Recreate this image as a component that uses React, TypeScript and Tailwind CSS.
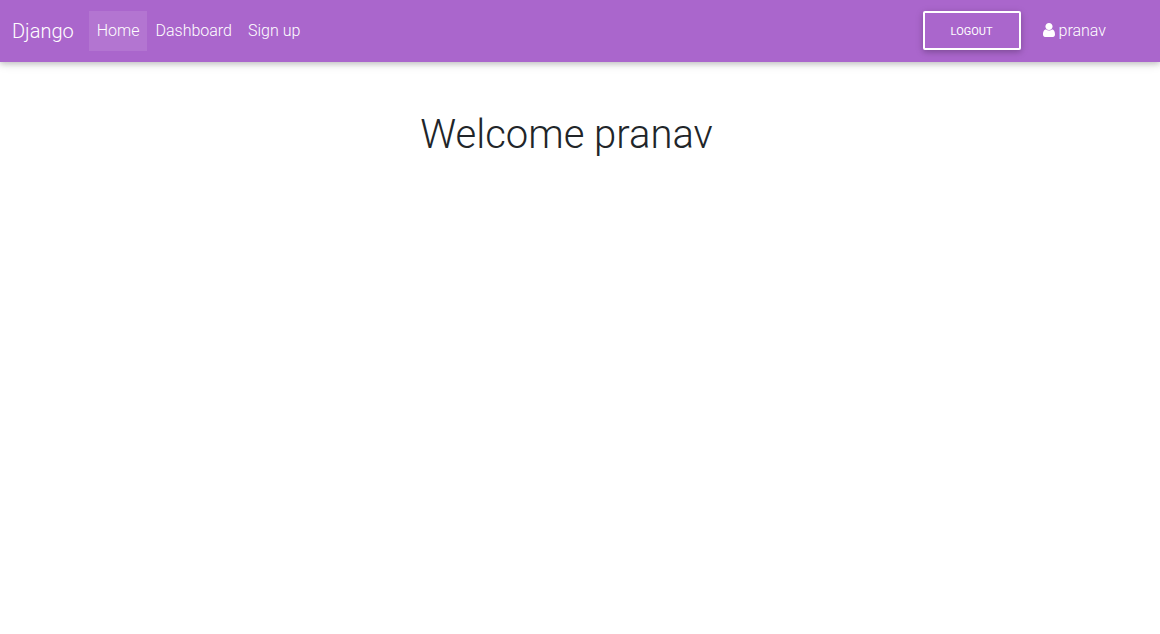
const links = [
  { label: "Home", active: true },
  { label: "Dashboard", active: false },
  { label: "Sign up", active: false },
];

export default function App() {
  return (
    <div className="min-h-screen bg-white font-['Roboto',sans-serif] font-light text-[#212529]">
      <nav className="flex items-center bg-[#aa66cc] px-3 py-[11px] text-white shadow-[0_2px_5px_0_rgba(0,0,0,0.16),0_2px_10px_0_rgba(0,0,0,0.12)]">
        <a href="#" className="mr-[15px] text-xl leading-[30px]">Django</a>
        <ul className="flex">
          {links.map((link) => (
            <li key={link.label} className={link.active ? "bg-white/10" : ""}>
              <a href="#" className="block p-2 text-base leading-6">{link.label}</a>
            </li>
          ))}
        </ul>
        <div className="ml-auto mr-[42px] flex items-start gap-[22px]">
          <button
            type="button"
            className="h-[39px] w-[98px] rounded-xs border-2 border-white pt-0.5 text-[11px] font-normal uppercase leading-4 shadow-[0_2px_5px_0_rgba(0,0,0,0.16),0_2px_10px_0_rgba(0,0,0,0.12)]"
          >
            Logout
          </button>
          <a href="#" className="flex items-center gap-1 py-2 text-base leading-6">
            <svg viewBox="0 0 1280 1536" preserveAspectRatio="none" className="mb-0.5 h-[14px] w-3" fill="currentColor" aria-hidden="true">
              <path d="M1280 1271c0 145-96 265-213 265H213C96 1536 0 1416 0 1271c0-262 65-567 327-567 81 79 191 128 313 128s232-49 313-128c262 0 327 305 327 567zM1024 384c0 212-172 384-384 384S256 596 256 384 428 0 640 0s384 172 384 384z" />
            </svg>
            pranav
          </a>
        </div>
      </nav>
      <main className="px-3 pt-[49px]">
        <h1 className="mr-[27px] text-center text-[40px] leading-[48px]">Welcome pranav</h1>
      </main>
    </div>
  );
}
